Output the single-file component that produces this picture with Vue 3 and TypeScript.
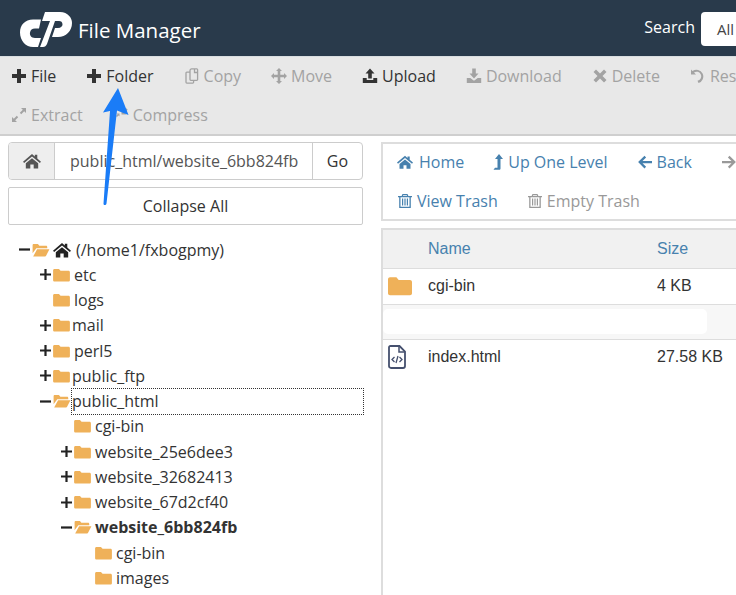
<script setup lang="ts">
interface Tool { icon: string; label: string; on?: boolean }
interface Nav { icon: string; label: string; off?: boolean; cls?: string }
interface Node { label: string; level: number; toggle?: '+' | '-'; open?: boolean; bold?: boolean; wide?: boolean; focus?: boolean; home?: boolean }

const row1: Tool[] = [
  { icon: 'plus', label: 'File', on: true },
  { icon: 'plus', label: 'Folder', on: true },
  { icon: 'copy', label: 'Copy' },
  { icon: 'move', label: 'Move' },
  { icon: 'upload', label: 'Upload', on: true },
  { icon: 'download', label: 'Download' },
  { icon: 'times', label: 'Delete' },
  { icon: 'undo', label: 'Restore' },
]
const row2: Tool[] = [
  { icon: 'expand', label: 'Extract' },
  { icon: 'compress', label: 'Compress' },
]
const nav1: Nav[] = [
  { icon: 'home', label: 'Home', cls: 'roomy' },
  { icon: 'up', label: 'Up One Level', cls: 'narrow' },
  { icon: 'left', label: 'Back' },
  { icon: 'right', label: 'Forward', off: true },
]
const nav2: Nav[] = [
  { icon: 'trash', label: 'View Trash' },
  { icon: 'trash', label: 'Empty Trash', off: true },
]
const tree: Node[] = [
  { label: '(/home1/fxbogpmy)', level: 0, toggle: '-', open: true, home: true },
  { label: 'etc', level: 1, toggle: '+', wide: true },
  { label: 'logs', level: 1, wide: true },
  { label: 'mail', level: 1, toggle: '+' },
  { label: 'perl5', level: 1, toggle: '+', wide: true },
  { label: 'public_ftp', level: 1, toggle: '+' },
  { label: 'public_html', level: 1, toggle: '-', open: true, focus: true },
  { label: 'cgi-bin', level: 2, wide: true },
  { label: 'website_25e6dee3', level: 2, toggle: '+', wide: true },
  { label: 'website_32682413', level: 2, toggle: '+', wide: true },
  { label: 'website_67d2cf40', level: 2, toggle: '+', wide: true },
  { label: 'website_6bb824fb', level: 2, toggle: '-', open: true, bold: true },
  { label: 'cgi-bin', level: 3, wide: true },
  { label: 'images', level: 3, wide: true },
]
</script>

<template>
  <div class="page">
    <svg class="defs" aria-hidden="true">
      <symbol id="plus" viewBox="0 0 16 16"><path d="M6 1h4v5h5v4h-5v5H6v-5H1V6h5z" /></symbol>
      <symbol id="copy" viewBox="0 0 16 16">
        <path fill="none" stroke="currentColor" stroke-width="1.300" d="M6 2.500V11.500c0 .5.300.8.800.8h6c.5 0 .8-.3.800-.8V1.700c0-.5-.3-.8-.8-.8H7.600C6.700.9 6 1.600 6 2.500zM6 4.200H2.800c-.5 0-.8.3-.8.8v9.300c0 .5.300.8.800.8h6c.5 0 .8-.3.800-.8v-2M10.500 1v3.500H14" />
      </symbol>
      <symbol id="move" viewBox="0 0 16 16"><path d="M8 0l3 3H9.300v3.700H13V5l3 3-3 3V9.300H9.300V13H11l-3 3-3-3h1.700V9.300H3V11L0 8l3-3v1.700h3.700V3H5z" /></symbol>
      <symbol id="upload" viewBox="0 0 16 16"><path d="M8 .5l4.500 5H9.800v5H6.200v-5H3.500zM.8 10h3.900v2h6.600v-2h3.900v5H.8z" /></symbol>
      <symbol id="download" viewBox="0 0 16 16"><path d="M6.200.5h3.600v5h2.700L8 10.500l-4.500-5h2.700zM.8 10h3.500L8 12.800 11.700 10h3.500v5H.8z" /></symbol>
      <symbol id="times" viewBox="0 0 16 16"><path d="M4 1.500L8 5.500l4-4L14.500 4l-4 4 4 4-2.500 2.500-4-4-4 4L1.500 12l4-4-4-4z" /></symbol>
      <symbol id="undo" viewBox="0 0 16 16"><path d="M1 1.500l1.500 1.500A6.800 6.800 0 1 1 8.500 15l-1-2.200a4.600 4.600 0 1 0-3.500-8.300L6 6.500H1z" /></symbol>
      <symbol id="expand" viewBox="0 0 16 16"><path d="M10 1h5v5l-1.800-1.800-3 3-1.400-1.400 3-3zM1 15v-5l1.800 1.800 3-3 1.400 1.400-3 3L6 15z" /></symbol>
      <symbol id="compress" viewBox="0 0 16 16"><path d="M8.500 7.500v-5l1.800 1.800 3-3 1.400 1.400-3 3 1.800 1.800zM3.500 6.500h3v3L5.500 8.500 4 10 3 9l1.500-1.500z" /></symbol>
      <symbol id="home" viewBox="0 0 16 16"><path d="M8 1.800l2.500 2.100V2.500h2.200v3.300L16 8.600l-1 1.200L8 4 1 9.800 0 8.600zM8 5.500l5.500 4.600v4.600H9.500v-3.500h-3v3.500H2.500v-4.600z" /></symbol>
      <symbol id="up" viewBox="0 0 10 16"><path d="M6 0l4 5H7.500v9.500c0 .8-.5 1.300-1.300 1.300H.5L2 13.800h2.500V5H2z" /></symbol>
      <symbol id="left" viewBox="0 0 16 16"><path d="M7.500 1.800l1.600 1.600L5.500 7H15v2.200H5.500l3.600 3.600-1.600 1.600L1.100 8.100z" /></symbol>
      <symbol id="right" viewBox="0 0 16 16"><path d="M8.500 1.800L6.900 3.400 10.500 7H1v2.200h9.500l-3.600 3.600 1.600 1.600 6.400-6.300z" /></symbol>
      <symbol id="trash" viewBox="0 0 16 16"><path fill-rule="evenodd" d="M5.500 1h5l.9 2H15v1.300h-1.200V15H2.200V4.300H1V3h3.600zM6.200 2.200L5.900 3h4.200l-.3-.8zM3.500 4.300v9.400h9V4.300zM5 5.500h1.200v7H5zM7.400 5.500h1.200v7H7.400zM9.800 5.500H11v7H9.800z" /></symbol>
      <symbol id="folder" viewBox="0 0 18 15"><path d="M1.500 1h4.800l1.700 2h8.500c.8 0 1.500.7 1.500 1.500v8.500c0 .8-.7 1.500-1.500 1.500h-15C.7 14.500 0 13.800 0 13V2.500C0 1.700.7 1 1.500 1z" /></symbol>
      <symbol id="folder-open" viewBox="0 0 18 15"><path d="M1.200 1h4.500L7.300 3h7.200c.7 0 1.200.5 1.200 1.200V5.500H4L0 11V2.200C0 1.500.5 1 1.200 1zM4.800 6.700H18l-3.700 7.300c-.2.300-.5.500-.9.500H.6z" /></symbol>
    </svg>

    <header class="topbar">
      <div class="brand">
        <svg class="logo" viewBox="0 0 52 35" aria-label="cPanel logo">
          <path d="M21 7.500H13C5 7.500 0 13 0 20.500 0 29 6 35 13 35H18L21 26H15C11 26 9.500 23 10 20.500 10.500 18 12 16.500 15 16.500H19Z" />
          <path d="M25 0H40C48 0 52 6 52 11 52 19 46 25 38 25H32L35 16H38C41 16 42.500 14 42.500 12.500 42.500 10 41 9 39 9H35L27 32C26 34 25 35 23 35H20L30 9H22Z" />
        </svg>
        <span class="title">File Manager</span>
      </div>
      <div class="search">
        <span class="search-label">Search</span>
        <div class="select">All</div>
      </div>
    </header>

    <section class="toolbar">
      <div class="tool-row">
        <span v-for="t in row1" :key="t.label" class="tool" :class="{ on: t.on }">
          <svg class="ic"><use :href="'#' + t.icon" /></svg>{{ t.label }}
        </span>
      </div>
      <div class="tool-row">
        <span v-for="t in row2" :key="t.label" class="tool" :class="{ on: t.on }">
          <svg class="ic"><use :href="'#' + t.icon" /></svg>{{ t.label }}
        </span>
      </div>
    </section>

    <main class="columns">
      <aside class="left">
        <div class="pathbar">
          <div class="addon"><svg class="ic home-ic"><use href="#home" /></svg></div>
          <div class="path">public_html/website_6bb824fb</div>
          <div class="go">Go</div>
        </div>
        <div class="collapse">Collapse All</div>
        <ul class="tree">
          <li
            v-for="n in tree"
            :key="n.label + n.level"
            class="node"
            :style="{ paddingLeft: 19 + n.level * 21 + 'px' }"
          >
            <span class="toggle">
              <svg v-if="n.toggle" viewBox="0 0 11 11">
                <path v-if="n.toggle === '+'" d="M4.400 0h2.200v4.400H11v2.200H6.600V11H4.400V6.600H0V4.400h4.400z" />
                <rect v-else x="0" y="4.400" width="11" height="2.200" />
              </svg>
            </span>
            <svg class="fold" :class="{ open: n.open }"><use :href="n.open ? '#folder-open' : '#folder'" /></svg>
            <svg v-if="n.home" class="ic tree-home"><use href="#home" /></svg>
            <span class="label" :class="{ bold: n.bold, wide: n.wide, focus: n.focus }">{{ n.label }}</span>
          </li>
        </ul>
      </aside>

      <section class="right">
        <div class="navpanel">
          <div class="nav-row">
            <span v-for="a in nav1" :key="a.label" class="nav-item" :class="[a.cls, { off: a.off }]">
              <svg class="ic"><use :href="'#' + a.icon" /></svg>{{ a.label }}
            </span>
          </div>
          <div class="nav-row">
            <span v-for="a in nav2" :key="a.label" class="nav-item" :class="{ off: a.off }">
              <svg class="ic"><use :href="'#' + a.icon" /></svg>{{ a.label }}
            </span>
          </div>
        </div>

        <div class="files">
          <div class="frow head">
            <span></span><span>Name</span><span>Size</span>
          </div>
          <div class="frow">
            <svg class="bigfold"><use href="#folder" /></svg>
            <span>cgi-bin</span><span>4 KB</span>
          </div>
          <div class="frow blank"><div class="blob"></div></div>
          <div class="frow last">
            <svg class="fileic" viewBox="0 0 18 24">
              <path d="M2.500 1H11.500L17 6.500V21c0 1.200-.8 2-2 2H3c-1.200 0-2-.8-2-2V2.500C1 1.600 1.600 1 2.500 1z" fill="none" stroke="#45506e" stroke-width="1.800" />
              <path d="M11 1.500V7h5.500" fill="none" stroke="#45506e" stroke-width="1.500" />
              <path d="M6.500 12L4 14.500 6.500 17M11.500 12L14 14.500 11.500 17M10 11L8 18" fill="none" stroke="#45506e" stroke-width="1.300" />
            </svg>
            <span>index.html</span><span>27.58 KB</span>
          </div>
        </div>
      </section>
    </main>

    <svg class="arrow" viewBox="0 0 736 595" aria-hidden="true">
      <path d="M118 88L128.500 115 117 110.500 106.500 203.500C106 205.500 103.500 205.500 103.500 203.500L110 111 103 112.500Z" />
    </svg>
  </div>
</template>

<style>
html, body { margin: 0; background: #fff; }
</style>

<style scoped>
.page {
  position: relative;
  width: 736px;
  height: 595px;
  overflow: hidden;
  background: #fff;
  color: #333;
  font-family: "Open Sans", "Noto Sans", sans-serif;
  font-size: 16px;
  display: flex;
  flex-direction: column;
}
.defs { position: absolute; width: 0; height: 0; }
.ic { width: 16px; height: 16px; fill: currentColor; flex: none; }

.topbar {
  height: 56px;
  flex: none;
  background: #293a4b;
  display: flex;
  align-items: center;
  justify-content: space-between;
  color: #fff;
}
.brand { display: flex; align-items: center; padding-left: 20px; }
.logo { width: 52px; height: 35px; fill: #fff; margin-top: 3px; }
.title { font-size: 20.500px; margin-left: 6px; margin-top: 3px; }
.search { display: flex; align-items: center; gap: 6px; margin-top: 1px; }
.search-label { margin-top: -3px; }
.select {
  width: 19px;
  height: 34px;
  padding-left: 16px;
  background: #fff;
  color: #444;
  border-radius: 4px 0 0 4px;
  line-height: 34px;
  font-size: 15px;
}

.toolbar {
  background: #e8e8e8;
  border-top: 1px solid #d8dde0;
  border-bottom: 2px solid #cfcfcf;
  height: 80px;
  flex: none;
  box-sizing: border-box;
  padding-left: 11px;
}
.tool-row { display: flex; height: 38.500px; align-items: center; gap: 30px; white-space: nowrap; }
.tool { display: inline-flex; align-items: center; gap: 4px; color: #a3a3a3; }
.tool.on { color: #333; }

.columns { display: flex; flex: 1; min-height: 0; }
.left { width: 381px; flex: none; padding: 6px 0 0 8px; box-sizing: border-box; }
.pathbar {
  width: 355px;
  height: 38px;
  box-sizing: border-box;
  border: 1px solid #ccc;
  border-radius: 4px;
  display: flex;
  align-items: center;
}
.addon {
  width: 46px;
  height: 100%;
  background: #eee;
  border-right: 1px solid #ccc;
  border-radius: 3px 0 0 3px;
  display: flex;
  align-items: center;
  justify-content: center;
  box-sizing: border-box;
}
.home-ic { width: 18px; height: 18px; color: #555; }
.path {
  width: 257px;
  height: 100%;
  line-height: 36px;
  padding-left: 15px;
  box-sizing: border-box;
  color: #555;
  white-space: nowrap;
}
.go {
  flex: 1;
  height: 100%;
  border-left: 1px solid #ccc;
  text-align: center;
  line-height: 36px;
}
.collapse {
  width: 355px;
  height: 38px;
  box-sizing: border-box;
  margin-top: 7px;
  border: 1px solid #ccc;
  border-radius: 2px;
  text-align: center;
  line-height: 36px;
}
.tree { list-style: none; margin: 12px 0 0 -8px; padding: 0; }
.node { display: flex; align-items: center; height: 25.250px; white-space: nowrap; }
.toggle { width: 13px; flex: none; display: flex; align-items: center; }
.toggle svg { width: 11px; height: 11px; fill: #222; }
.fold { width: 17px; height: 14px; fill: #efb159; flex: none; }
.fold.open { width: 18px; }
.tree-home { margin-left: 3px; width: 18px; height: 18px; color: #222; }
.label { margin-left: 2px; color: #333; }
.label.wide { margin-left: 4px; }
.label.bold { margin-left: 3px; }
.tree-home + .label { margin-left: 5px; }
.label.bold { font-weight: 700; }
.label.focus {
  flex: none;
  width: 293px;
  height: 27px;
  line-height: 25px;
  box-sizing: border-box;
  margin-left: 0;
  border: 1px dotted #333;
}

.right { flex: 1; min-width: 0; padding-top: 6px; color: #333; display: flex; flex-direction: column; }
.navpanel {
  height: 79px;
  flex: none;
  box-sizing: border-box;
  border: 2px solid #ddd;
  border-right: 0;
  padding-left: 14px;
}
.nav-row { display: flex; align-items: center; gap: 29px; height: 39px; white-space: nowrap; position: relative; top: -1.500px; }
.nav-item { display: inline-flex; align-items: center; gap: 4px; color: #4781ae; }
.nav-item.off { color: #999; }
.nav-item.roomy { gap: 6px; }
.nav-item.narrow { gap: 5px; }
.nav-item.narrow .ic { width: 10px; }

.files {
  flex: 1;
  margin-top: 7px;
  border-left: 2px solid #ddd;
  border-top: 2px solid #ddd;
  font-family: "Liberation Sans", Arial, sans-serif;
  color: #333;
}
.frow {
  display: grid;
  grid-template-columns: 45px 229px 1fr;
  align-items: center;
  height: 34.500px;
  border-bottom: 1px solid #ddd;
}
.frow.head { height: 38px; background: #f1f1f1; color: #4781ae; }
.frow.blank { display: flex; background: #f7f7f7; }
.blob { width: 324px; height: 25px; background: #fff; border-radius: 5px; }
.frow.last { border-bottom: 0; }
.bigfold { width: 24px; height: 20px; margin-left: 5px; fill: #efb159; }
.fileic { width: 18px; height: 24px; margin-left: 5px; }

.arrow { position: absolute; inset: 0; width: 736px; height: 595px; fill: #1a7cf7; pointer-events: none; }
</style>
